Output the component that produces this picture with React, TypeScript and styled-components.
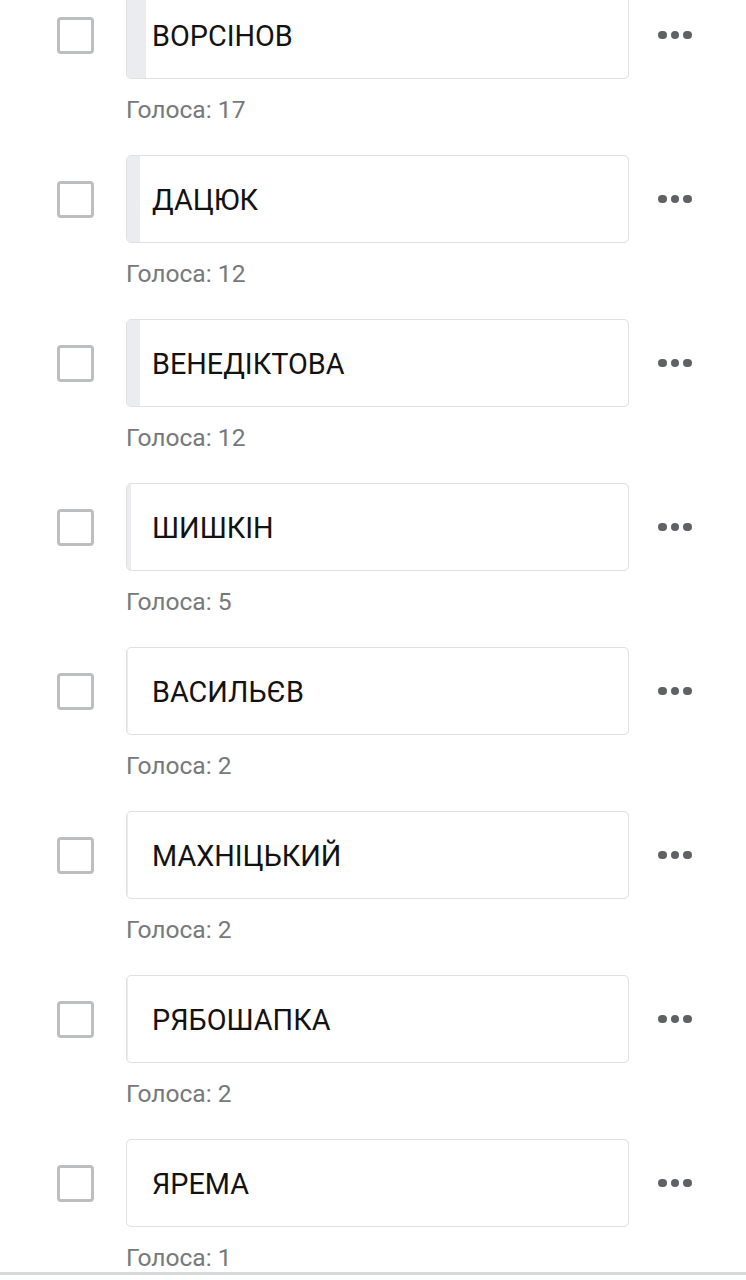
import React from "react";
import styled, { createGlobalStyle } from "styled-components";

const GlobalStyle = createGlobalStyle`
  html, body {
    margin: 0;
    padding: 0;
    background: #ffffff;
    font-family: Roboto, "Noto Sans", "Liberation Sans", sans-serif;
    overflow: hidden;
  }
`;

const Page = styled.div`
  width: 746px;
  height: 1280px;
  overflow: hidden;
  background: #ffffff;
`;

const List = styled.div`
  display: flex;
  flex-direction: column;
  gap: 31px;
  margin-top: -9px;
  border-bottom: 3px solid #d6d8da;
`;

const Row = styled.div`
  display: grid;
  grid-template-columns: 126px 503px 1fr;
  grid-template-rows: 88px auto;
  row-gap: 17px;
`;

const CheckCell = styled.div`
  display: flex;
  align-items: center;
  padding-left: 57px;
`;

const Checkbox = styled.div`
  width: 37px;
  height: 37px;
  box-sizing: border-box;
  border: 3.5px solid #bcbec0;
  border-radius: 4px;
`;

const OptionBox = styled.div`
  position: relative;
  box-sizing: border-box;
  height: 88px;
  border: 1px solid #dfe0e2;
  border-radius: 5px;
  overflow: hidden;
  display: flex;
  align-items: center;
  background: #ffffff;
`;

const Fill = styled.div`
  position: absolute;
  left: 0;
  top: 0;
  bottom: 0;
  background: #eaecf0;
`;

const Name = styled.span`
  position: relative;
  padding-left: 25px;
  padding-top: 2px;
  font-size: 28.8px;
  color: #121212;
`;

const MenuCell = styled.div`
  display: flex;
  align-items: center;
  padding-left: 29px;
`;

const Dots = styled.div`
  display: flex;
  gap: 4px;
`;

const Dot = styled.span`
  width: 8.5px;
  height: 8.5px;
  border-radius: 50%;
  background: #5f6164;
`;

const Votes = styled.div`
  grid-column: 2;
  font-size: 24.6px;
  line-height: 28px;
  color: #76797c;
`;

const options = [
  { name: "ВОРСІНОВ", votes: 17, fill: 19 },
  { name: "ДАЦЮК", votes: 12, fill: 13 },
  { name: "ВЕНЕДІКТОВА", votes: 12, fill: 13 },
  { name: "ШИШКІН", votes: 5, fill: 4 },
  { name: "ВАСИЛЬЄВ", votes: 2, fill: 1 },
  { name: "МАХНІЦЬКИЙ", votes: 2, fill: 1 },
  { name: "РЯБОШАПКА", votes: 2, fill: 1 },
  { name: "ЯРЕМА", votes: 1, fill: 0 },
];

export default function App() {
  return (
    <Page>
      <GlobalStyle />
      <List>
        {options.map((o) => (
          <Row key={o.name}>
            <CheckCell>
              <Checkbox />
            </CheckCell>
            <OptionBox>
              <Fill style={{ width: `${o.fill}px` }} />
              <Name>{o.name}</Name>
            </OptionBox>
            <MenuCell>
              <Dots>
                <Dot />
                <Dot />
                <Dot />
              </Dots>
            </MenuCell>
            <Votes>Голоса: {o.votes}</Votes>
          </Row>
        ))}
      </List>
    </Page>
  );
}
